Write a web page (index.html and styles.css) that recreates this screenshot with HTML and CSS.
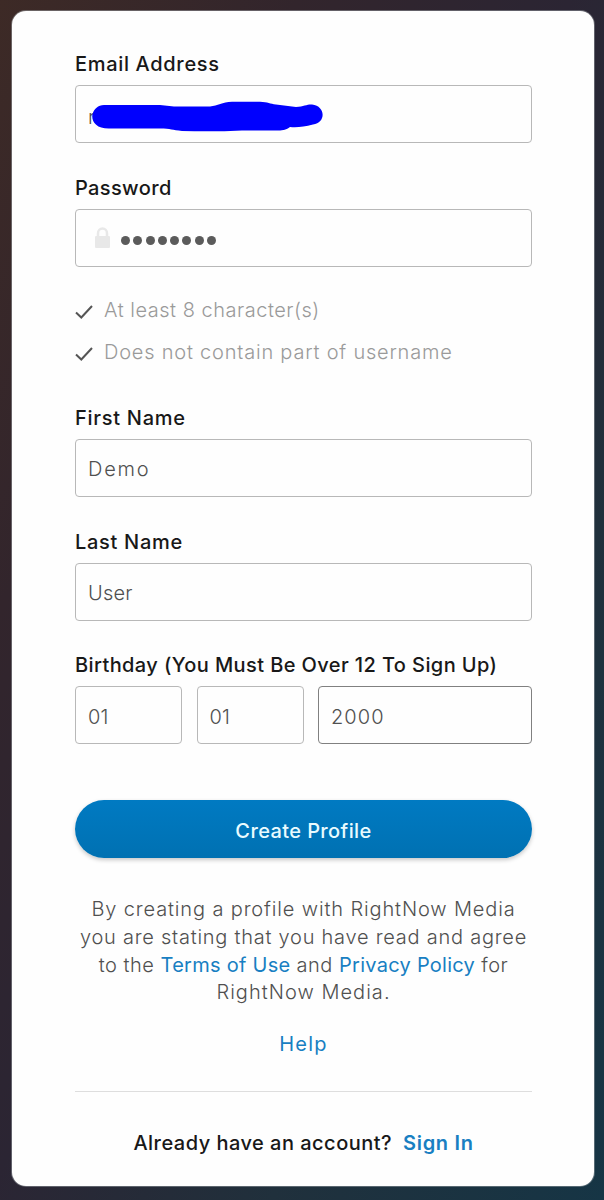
FILE: index.html
```html
<!DOCTYPE html>
<html lang="en">
<head>
<meta charset="utf-8">
<title>Create Profile</title>
<link rel="stylesheet" href="styles.css">
</head>
<body>
<main class="card">
  <form class="form">
    <div class="field">
      <label class="label label-email">Email Address</label>
      <div class="input input-email"><span class="value">r</span>
        <svg class="scribble" width="232" height="32" viewBox="0 0 232 32"><path fill="#0000fe" d="M12 4H68L82 5.500H118C126 5 130 1 140 .8H168C176 1 178 3 184 3.500L204 6C212 5.500 215 3.200 220 3.500C234 5 234 22 221 23.500C212 26 205 26.500 198 26C194 29 192 29.300 186 29.500H150C130 30.500 110 30.500 90 30C80 29 79 27.500 68 27.500H18C4 28-1 20 .5 13C2 8 6 4 12 4Z"/></svg>
      </div>
    </div>
    <div class="field">
      <label class="label label-password">Password</label>
      <div class="input input-password">
        <svg class="lock" width="15" height="22" viewBox="0 0 15 22"><path d="M3 10V6.200a4.500 4.700 0 0 1 9 0V10" fill="none" stroke="#e8e8e8" stroke-width="2.500"/><rect y="9" width="15" height="12" rx="1" fill="#e8e8e8"/></svg>
        <div class="dots"><i></i><i></i><i></i><i></i><i></i><i></i><i></i><i></i></div>
      </div>
    </div>
    <ul class="rules">
      <li><svg class="check" width="18" height="14" viewBox="0 0 18 14"><path d="M1 7.500l5.300 5L17 1"/></svg><span class="rule-length">At least 8 character(s)</span></li>
      <li><svg class="check" width="18" height="14" viewBox="0 0 18 14"><path d="M1 7.500l5.300 5L17 1"/></svg><span class="rule-name">Does not contain part of username</span></li>
    </ul>
    <div class="field">
      <label class="label label-first">First Name</label>
      <div class="input"><span class="value value-first">Demo</span></div>
    </div>
    <div class="field">
      <label class="label label-last">Last Name</label>
      <div class="input"><span class="value value-last">User</span></div>
    </div>
    <div class="field field-birthday">
      <label class="label label-birthday">Birthday (You Must Be Over 12 To Sign Up)</label>
      <div class="dates">
        <div class="input"><span class="value">01</span></div>
        <div class="input"><span class="value">01</span></div>
        <div class="input input-active"><span class="value value-year">2000</span></div>
      </div>
    </div>
    <button class="submit" type="button">Create Profile</button>
  </form>
  <p class="terms"><span class="t1">By creating a profile with RightNow Media</span><br><span class="t2">you are stating that you have read and agree</span><br><span class="t3">to the <a>Terms of Use</a> and <a>Privacy Policy</a> for</span><br><span class="t4">RightNow Media.</span></p>
  <a class="help">Help</a>
  <footer class="signin"><span class="question">Already have an account?</span><a class="signin-link">Sign In</a></footer>
</main>
</body>
</html>
```
FILE: styles.css
```css
* { box-sizing: border-box; }
body {
  margin: 0;
  height: 1200px;
  padding: 11px 10px 14px 12px;
  background: linear-gradient(116deg, #3d2a26 0%, #32252c 25%, #2b2533 48%, #20303c 72%, #163545 100%);
  font-family: Inter, "Liberation Sans", sans-serif;
  font-size: 20px;
  color: #5c5c5c;
}
.card {
  height: 1175px;
  padding: 41px 62px 0 63px;
  border-radius: 14px;
  background: #fefefe;
  box-shadow: 0 0 0 1px rgba(165, 170, 175, .45);
}
.form { display: flex; flex-direction: column; }
.field + .field { margin-top: 33px; }
.field + .field-birthday { margin-top: 32px; }
.label {
  display: block;
  height: 24px;
  margin-bottom: 9px;
  line-height: 25px;
  font-weight: 500;
  color: #181818;
  white-space: nowrap;
}
.label-email { letter-spacing: .67px; }
.label-password { letter-spacing: .37px; }
.label-first { letter-spacing: .72px; }
.label-last { letter-spacing: .7px; }
.label-birthday { letter-spacing: .4px; }
.input {
  display: flex;
  align-items: center;
  height: 58px;
  padding: 2px 12px 0;
  border: 1.500px solid #b8b8b8;
  border-radius: 4px;
  font-weight: 300;
  color: #505050;
}
.dates .input { padding-top: 3px; }
.input-active { border-color: #808080; }
.input-email { padding-top: 5px; }
.value { letter-spacing: .2px; }
.value-first { letter-spacing: 1.800px; }
.value-year { letter-spacing: 1.050px; }
.scribble { margin-left: -3px; }
.input-password { padding: 0 19px; }
.lock { margin: -1px 11px 0 0; }
.dots { display: flex; gap: 3.300px; margin-top: 5px; }
.dots i { width: 9px; height: 9px; border-radius: 50%; background: #5b5b5b; }
.rules {
  margin: 22px 0 33px;
  padding: 0;
  list-style: none;
  font-weight: 300;
  color: #9a9a9a;
}
.rules li { display: flex; align-items: center; gap: 11px; height: 42px; white-space: nowrap; }
.rule-length { letter-spacing: .51px; }
.rule-name { letter-spacing: .79px; }
.check { margin-top: 4px; fill: none; stroke: #555; stroke-width: 2; }
.dates { display: grid; grid-template-columns: 107px 107px 1fr; gap: 14.500px; }
.submit {
  height: 58px;
  margin-top: 56px;
  padding: 3px 0 0;
  border: 0;
  border-radius: 29px;
  background: linear-gradient(#007ac2, #0071b2);
  box-shadow: 0 2px 4px rgba(0, 0, 0, .22);
  font: 500 20px Inter, sans-serif;
  letter-spacing: .4px;
  color: #e9fbff;
}
.terms {
  margin: 38px -10px 0;
  line-height: 27.750px;
  font-weight: 300;
  color: #505050;
  text-align: center;
  white-space: nowrap;
}
.t1 { letter-spacing: .86px; }
.t2 { letter-spacing: .75px; }
.t3 { letter-spacing: .5px; }
.t3 a { letter-spacing: .27px; }
.t4 { letter-spacing: 1.030px; }
a { color: #187fc2; font-weight: 400; }
.help { display: block; margin-top: 25px; line-height: 24px; text-align: center; letter-spacing: 1.250px; }
.signin {
  display: flex;
  justify-content: center;
  gap: 11px;
  margin-top: 35px;
  padding-top: 39px;
  border-top: 1px solid #dedede;
  line-height: 24px;
  font-weight: 500;
  color: #181818;
  white-space: nowrap;
}
.question { letter-spacing: .48px; }
.signin-link { font-weight: 600; letter-spacing: .68px; }
```
